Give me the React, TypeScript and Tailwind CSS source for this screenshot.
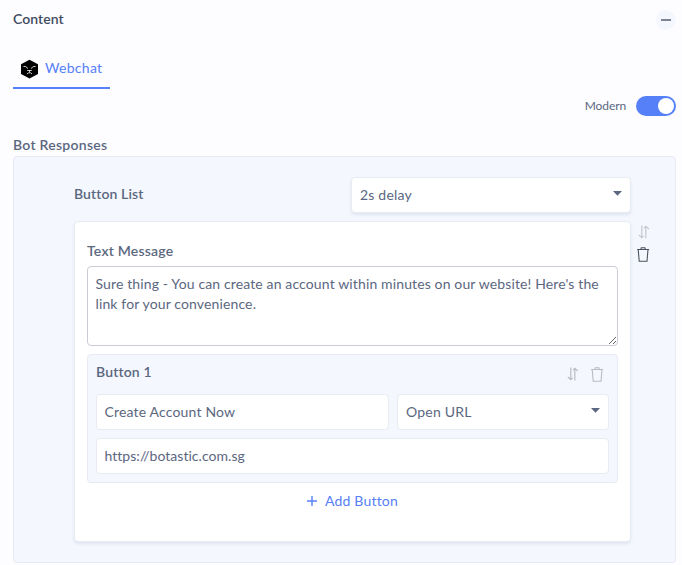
import React from "react";

function SortIcon({ className }: { className: string }) {
  return (
    <svg viewBox="0 0 12 14" width="12" height="14" fill="none" stroke="currentColor" strokeWidth="1.2" className={className}>
      <path d="M3.8 0.5V12.5M0.9 10L3.8 12.7L5.7 10.8M7.8 13.5V1.5M5.9 3.2L7.8 1.3L10.8 4" />
    </svg>
  );
}

function TrashIcon({ className }: { className: string }) {
  return (
    <svg viewBox="0 0 13 15" width="13" height="15" fill="none" stroke="currentColor" strokeWidth="1.1" className={className}>
      <path d="M0.1 2.5H12.1M3.8 2.5L4.3 0.7H7.9L8.4 2.5M1.2 2.5L2.2 14.2H10L11 2.5" />
    </svg>
  );
}

function Caret() {
  return (
    <svg viewBox="0 0 10 5" width="10" height="5" className="-mr-px mb-[3px] text-[#5b6780]">
      <path d="M0 0H9L4.5 4.8Z" fill="currentColor" />
    </svg>
  );
}

export default function App() {
  return (
    <div className="flex h-[565px] w-[682px] flex-col bg-[#fdfdff] pl-[13px] pr-[6px] pt-[10px] font-['Lato','Noto_Sans',sans-serif] text-[14px] leading-5 tracking-[0.2px] text-[#5b6780]">
      <header className="flex h-5 items-center justify-between">
        <h1 className="pb-[2px] font-semibold tracking-[0.05px] text-[#414b5f]">Content</h1>
        <button className="flex size-5 items-center justify-center rounded-full bg-[#f4f7fe]">
          <span className="h-[2px] w-[10px] bg-[#7d8494]" />
        </button>
      </header>

      <nav className="mt-5 flex">
        <div className="flex h-[39px] w-[97px] items-center border-b-2 border-[#5580f8] pl-2 text-[#5580f8]">
          <svg viewBox="0 0 18 20" width="18" height="20" className="mr-[6px]">
            <path d="M8.5 0.8L17 5.2V15L8.5 19.6L0 15V5.2Z" fill="#000" />
            <path
              d="M2.5 7.5H4.5L7 9.5M14.5 7.5H12.5L10 9.5M6.2 11.5H10.8M8.5 11.5V13.5M6 15L7.5 13.8H9.5L11 15"
              stroke="#e2e2e2"
              strokeWidth="0.9"
              fill="none"
            />
          </svg>
          <span className="pb-px tracking-[0.3px]">Webchat</span>
        </div>
      </nav>

      <div className="mt-[7px] flex h-5 items-center justify-end gap-[10px] text-[12px] tracking-[-0.1px]">
        <span>Modern</span>
        <span className="flex h-5 w-10 items-center justify-end rounded-full bg-[#5580f8] pr-[2px]">
          <span className="size-4 rounded-full bg-white" />
        </span>
      </div>

      <h2 className="mt-[19px] h-[21px] font-semibold tracking-[0.27px]">Bot Responses</h2>
      <section className="flex h-[407px] w-[663px] flex-col rounded-[4px] border border-[#e7eaf2] bg-[#f4f7fe] pl-[60px] pt-5">
        <div className="flex h-9 w-[557px] items-center justify-between">
          <h3 className="pb-[2px] font-semibold tracking-[0.1px]">Button List</h3>
          <div className="flex h-9 w-[280px] items-center justify-between rounded-[4px] border border-[#e8ebf1] bg-white px-2 shadow-[0_2px_3px_rgba(90,105,140,0.12)]">
            <span>2s delay</span>
            <Caret />
          </div>
        </div>

        <div className="mt-2 flex">
          <div className="h-[321px] w-[557px] rounded-[4px] border border-[#e8ebf1] bg-white px-3 pt-[19px] shadow-[0_2px_3px_rgba(90,105,140,0.12)]">
            <h4 className="h-[25px] font-semibold tracking-[0.2px]">Text Message</h4>
            <textarea
              className="block h-20 w-[531px] resize rounded-[4px] border border-[#c9ccd4] bg-white px-[7.5px] py-[7px] tracking-[0.13px]"
              defaultValue="Sure thing - You can create an account within minutes on our website! Here's the link for your convenience."
            />
            <div className="mt-2 h-[129px] w-[531px] rounded-[4px] border border-[#e7eaf2] bg-[#f4f7fe] px-2 pt-[7px]">
              <div className="flex h-8 justify-between">
                <h5 className="font-semibold tracking-[0.15px]">Button 1</h5>
                <div className="flex gap-3 pr-[5px] pt-[5px] text-[#b9bcc3]">
                  <SortIcon className="" />
                  <TrashIcon className="" />
                </div>
              </div>
              <div className="flex gap-2">
                <div className="flex h-9 w-[293px] items-center rounded-[4px] border border-[#e8ebf1] bg-white px-[7.5px] tracking-[0.17px]">Create Account Now</div>
                <div className="flex h-9 w-[212px] items-center justify-between rounded-[4px] border border-[#e8ebf1] bg-white px-2">
                  <span>Open URL</span>
                  <Caret />
                </div>
              </div>
              <div className="mt-2 flex h-9 w-[513px] items-center rounded-[4px] border border-[#e8ebf1] bg-white px-[7.5px] tracking-[0.04px]">https://botastic.com.sg</div>
            </div>
            <button className="mt-2 flex h-5 w-[531px] items-center justify-center gap-2 text-[#5580f8]">
              <svg viewBox="0 0 10 10" width="10" height="10">
                <path d="M5 0V10M0 5H10" stroke="currentColor" strokeWidth="1.4" />
              </svg>
              <span>Add Button</span>
            </button>
          </div>
          <div className="flex flex-col items-center gap-2 pl-[6px] pt-1">
            <SortIcon className="text-[#c6c9d0]" />
            <TrashIcon className="text-[#4c5260]" />
          </div>
        </div>
      </section>
    </div>
  );
}
